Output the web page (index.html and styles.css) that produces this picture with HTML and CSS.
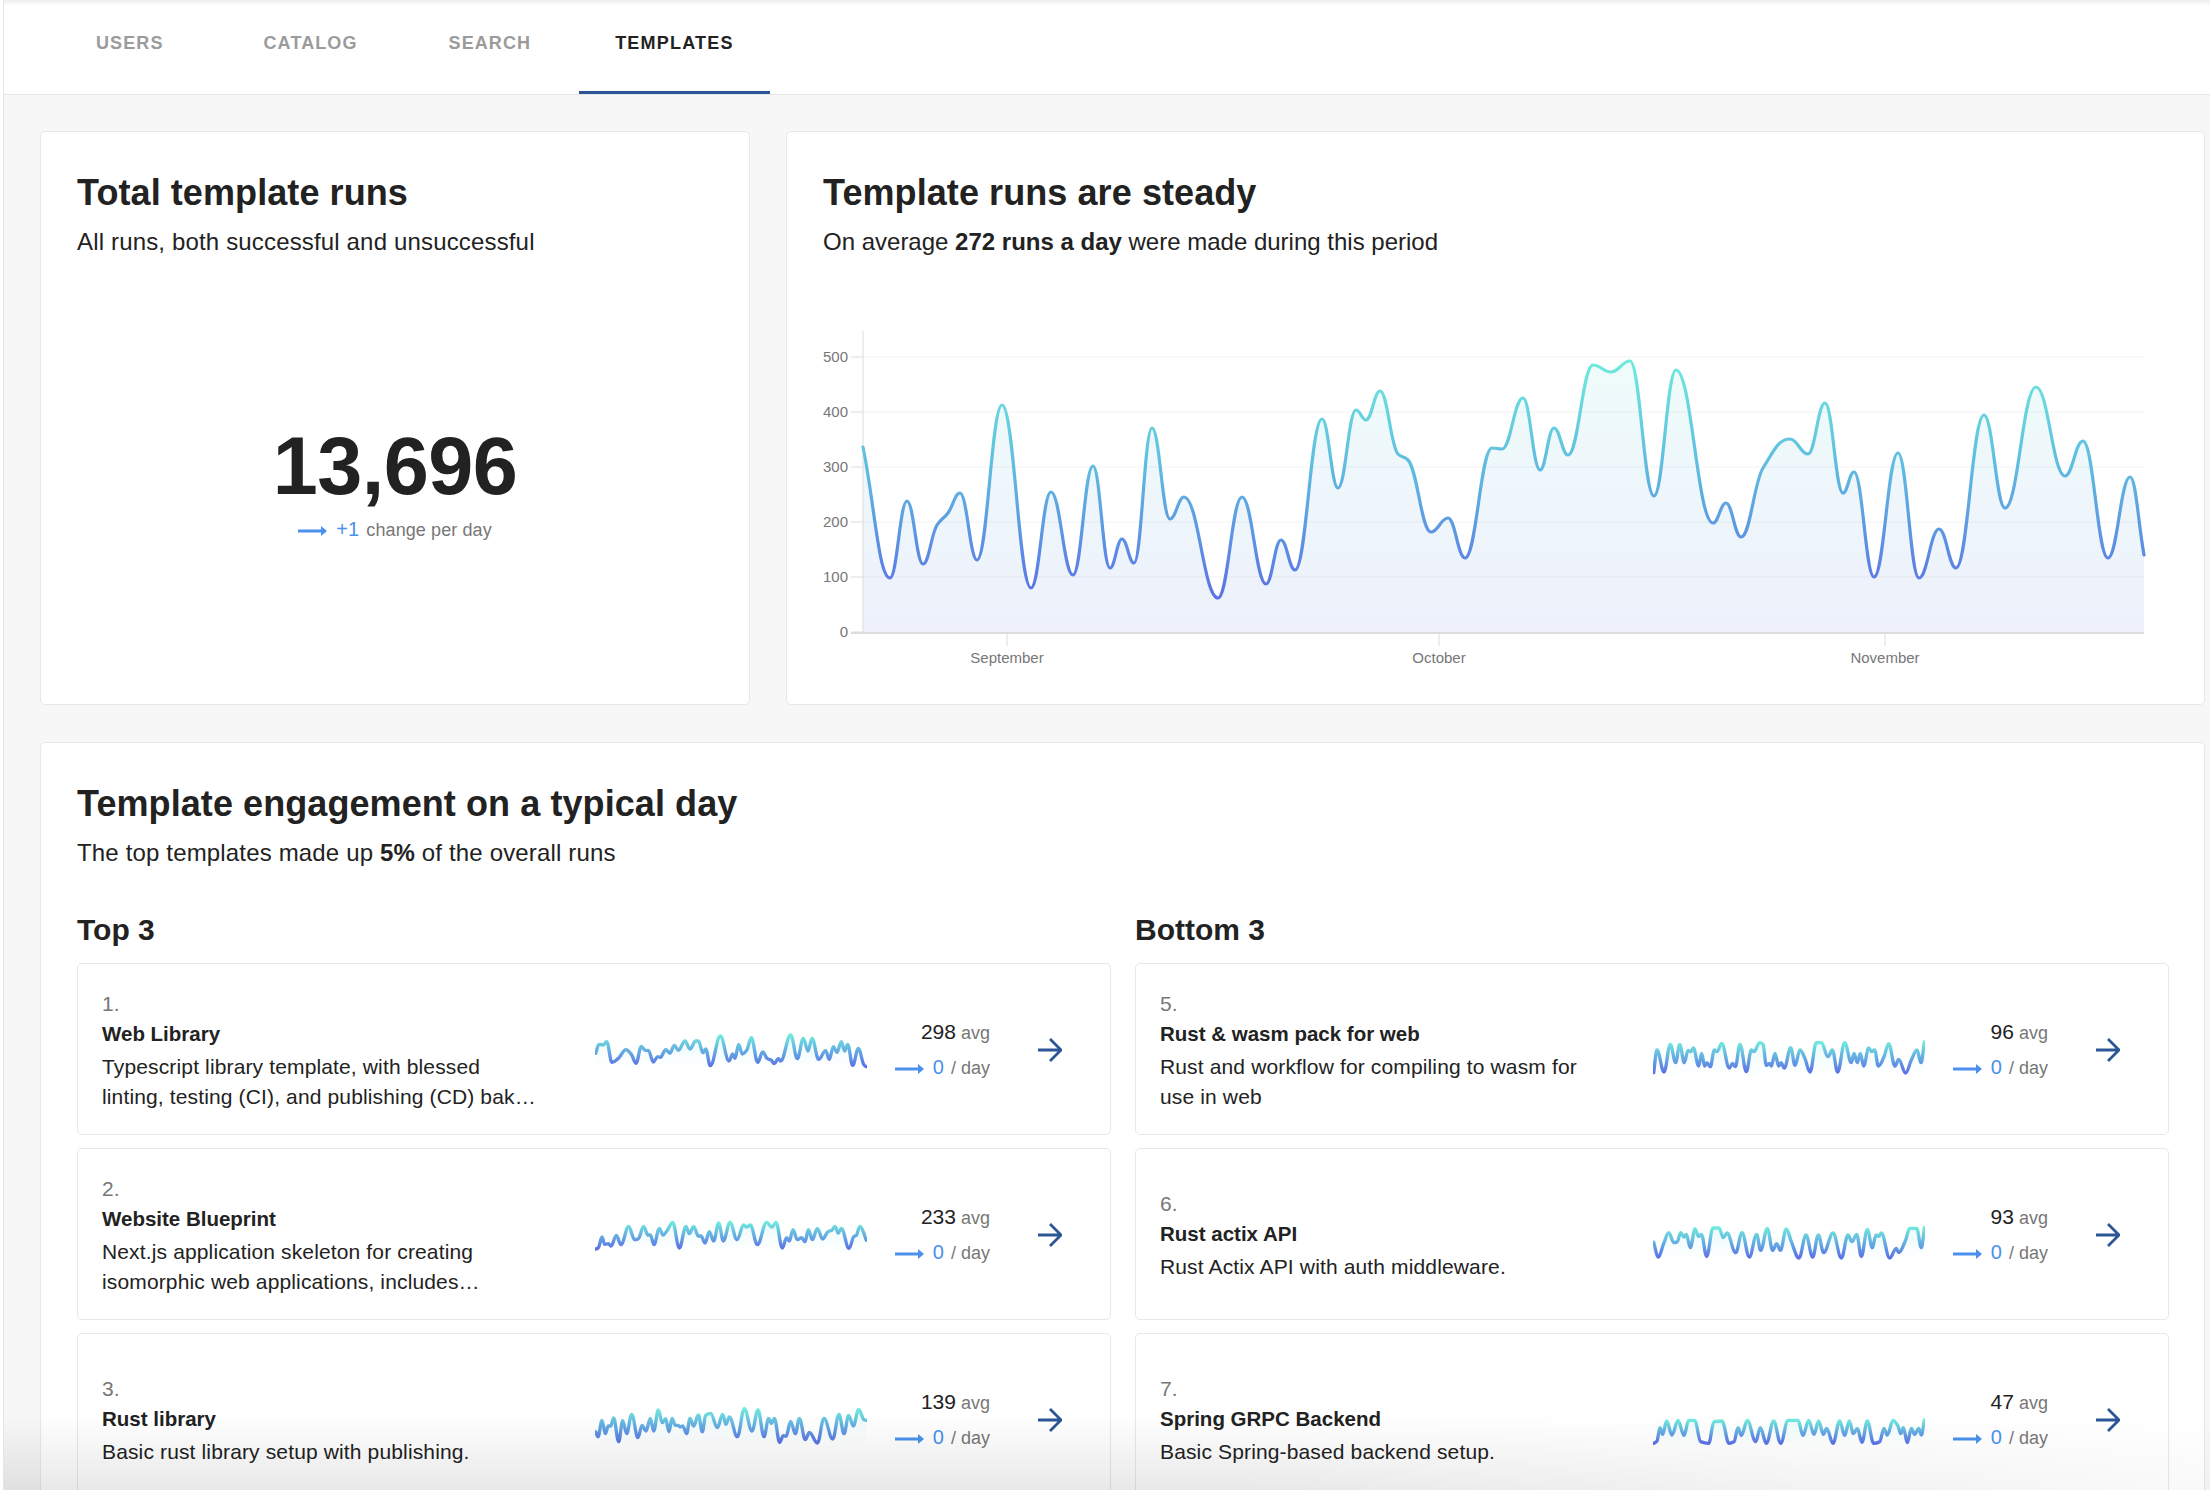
FILE: index.html
```html
<!DOCTYPE html>
<html lang="en">
<head>
<meta charset="UTF-8">
<title>Templates</title>
<link rel="stylesheet" href="styles.css">
</head>
<body>

<div class="page">
    <nav class="tabs">
        <a class="tab" href="#">USERS</a>
        <a class="tab" href="#">CATALOG</a>
        <a class="tab" href="#">SEARCH</a>
        <a class="tab tab-active" href="#">TEMPLATES</a>
    </nav>

    <main class="content">
        <div class="top-row">
            <section class="card">
                <h2 class="card-title">Total template runs</h2>
                <p class="card-sub card-sub-wide">All runs, both successful and unsuccessful</p>
                <div class="total">
                    <div class="total-number">13,696</div>
                    <div class="total-change">
                        <svg class="trend" viewBox="0 0 29 10"><path d="M0 5H24" /><polygon points="23,0 29,5 23,10" /></svg><span class="blue">+1</span> change per day
                    </div>
                </div>
            </section>

            <section class="card">
                <h2 class="card-title">Template runs are steady</h2>
                <p class="card-sub">On average <b>272 runs a day</b> were made during this period</p>
                <svg id="runsChart" class="runs-chart" viewBox="823 320 1345 350"></svg>
            </section>
        </div>

        <section class="card">
            <h2 class="card-title">Template engagement on a typical day</h2>
            <p class="card-sub card-sub-wide">The top templates made up <b>5%</b> of the overall runs</p>

            <div class="columns">
                <div class="column">
                    <h3 class="column-title">Top 3</h3>

                    <div class="item">
                        <div class="item-info">
                            <div class="item-num">1.</div>
                            <div class="item-name">Web Library</div>
                            <div class="item-desc">Typescript library template, with blessed linting, testing (CI), and publishing (CD) bak…</div>
                        </div>
                        <svg class="spark" data-spark="0"></svg>
                        <div class="item-stats">
                            <div class="stat-avg"><b>298</b> avg</div>
                            <div class="stat-day"><svg class="trend" viewBox="0 0 29 10"><path d="M0 5H24" /><polygon points="23,0 29,5 23,10" /></svg><span class="blue">0</span> / day</div>
                        </div>
                        <svg class="go" viewBox="0 0 24 24"><path d="M0 12H23M12 1L23 12L12 23" /></svg>
                    </div>

                    <div class="item">
                        <div class="item-info">
                            <div class="item-num">2.</div>
                            <div class="item-name">Website Blueprint</div>
                            <div class="item-desc">Next.js application skeleton for creating isomorphic web applications, includes…</div>
                        </div>
                        <svg class="spark" data-spark="1"></svg>
                        <div class="item-stats">
                            <div class="stat-avg"><b>233</b> avg</div>
                            <div class="stat-day"><svg class="trend" viewBox="0 0 29 10"><path d="M0 5H24" /><polygon points="23,0 29,5 23,10" /></svg><span class="blue">0</span> / day</div>
                        </div>
                        <svg class="go" viewBox="0 0 24 24"><path d="M0 12H23M12 1L23 12L12 23" /></svg>
                    </div>

                    <div class="item">
                        <div class="item-info">
                            <div class="item-num">3.</div>
                            <div class="item-name">Rust library</div>
                            <div class="item-desc">Basic rust library setup with publishing.</div>
                        </div>
                        <svg class="spark" data-spark="2"></svg>
                        <div class="item-stats">
                            <div class="stat-avg"><b>139</b> avg</div>
                            <div class="stat-day"><svg class="trend" viewBox="0 0 29 10"><path d="M0 5H24" /><polygon points="23,0 29,5 23,10" /></svg><span class="blue">0</span> / day</div>
                        </div>
                        <svg class="go" viewBox="0 0 24 24"><path d="M0 12H23M12 1L23 12L12 23" /></svg>
                    </div>
                </div>

                <div class="column">
                    <h3 class="column-title">Bottom 3</h3>

                    <div class="item">
                        <div class="item-info">
                            <div class="item-num">5.</div>
                            <div class="item-name">Rust &amp; wasm pack for web</div>
                            <div class="item-desc">Rust and workflow for compiling to wasm for use in web</div>
                        </div>
                        <svg class="spark" data-spark="3"></svg>
                        <div class="item-stats">
                            <div class="stat-avg"><b>96</b> avg</div>
                            <div class="stat-day"><svg class="trend" viewBox="0 0 29 10"><path d="M0 5H24" /><polygon points="23,0 29,5 23,10" /></svg><span class="blue">0</span> / day</div>
                        </div>
                        <svg class="go" viewBox="0 0 24 24"><path d="M0 12H23M12 1L23 12L12 23" /></svg>
                    </div>

                    <div class="item">
                        <div class="item-info">
                            <div class="item-num">6.</div>
                            <div class="item-name">Rust actix API</div>
                            <div class="item-desc">Rust Actix API with auth middleware.</div>
                        </div>
                        <svg class="spark" data-spark="4"></svg>
                        <div class="item-stats">
                            <div class="stat-avg"><b>93</b> avg</div>
                            <div class="stat-day"><svg class="trend" viewBox="0 0 29 10"><path d="M0 5H24" /><polygon points="23,0 29,5 23,10" /></svg><span class="blue">0</span> / day</div>
                        </div>
                        <svg class="go" viewBox="0 0 24 24"><path d="M0 12H23M12 1L23 12L12 23" /></svg>
                    </div>

                    <div class="item">
                        <div class="item-info">
                            <div class="item-num">7.</div>
                            <div class="item-name">Spring GRPC Backend</div>
                            <div class="item-desc">Basic Spring-based backend setup.</div>
                        </div>
                        <svg class="spark" data-spark="5"></svg>
                        <div class="item-stats">
                            <div class="stat-avg"><b>47</b> avg</div>
                            <div class="stat-day"><svg class="trend" viewBox="0 0 29 10"><path d="M0 5H24" /><polygon points="23,0 29,5 23,10" /></svg><span class="blue">0</span> / day</div>
                        </div>
                        <svg class="go" viewBox="0 0 24 24"><path d="M0 12H23M12 1L23 12L12 23" /></svg>
                    </div>
                </div>
            </div>
        </section>
    </main>

    <div class="top-shade"></div>
    <div class="bottom-fade"></div>
</div>

<script src="charts.js"></script>
</body>
</html>
```

FILE: styles.css
```css
* {
    box-sizing: border-box;
}
html, body {
    height: 100%;
    margin: 0;
    overflow: hidden;
}
body {
    font-family: "Liberation Sans", Arial, sans-serif;
    color: #222;
    background-color: #fff;
}
.page {
    position: relative;
    height: 100%;
    margin-left: 3px;
    overflow: hidden;
    border-left: 1px solid #e6e6e6;
    background-color: #f7f7f7;
}

/* tabs */
.tabs {
    display: flex;
    height: 95px;
    padding-left: 56px;
    border-bottom: 1px solid #e6e6e6;
    background-color: #fff;
}
.tab {
    display: block;
    height: 94px;
    padding: 32px 36px 0;
    margin-right: 28px;
    font-size: 18px;
    font-weight: bold;
    letter-spacing: 1.1px;
    line-height: 22px;
    text-decoration: none;
    color: #9b9b9b;
}
.tab:nth-child(2) {
    margin-right: 19px;
}
.tab:nth-child(3) {
    margin-right: 12px;
}
.tab-active {
    margin-right: 0;
    color: #222;
    border-bottom: 3px solid #2c5596;
}
.tab-active {
    letter-spacing: 1.2px;
}

.content {
    padding: 36px 5px 0 36px;
}
.top-row {
    display: grid;
    grid-template-columns: 710px 1fr;
    gap: 36px;
    margin-bottom: 37px;
}

/* cards */
.card {
    padding: 36px;
    border: 1px solid #e8e8e8;
    border-radius: 5px;
    background-color: #fff;
}
.top-row .card {
    height: 574px;
}
.card-title {
    margin: 0;
    font-size: 36px;
    line-height: 50px;
    letter-spacing: .08px;
}
.card-sub {
    margin: 6px 0 0;
    font-size: 24px;
    line-height: 36px;
}
.card-sub-wide {
    letter-spacing: .16px;
}

.total {
    margin-top: 161px;
    text-align: center;
}
.total-number {
    font-size: 81px;
    font-weight: bold;
    letter-spacing: -.5px;
    line-height: 90px;
}
.total-change {
    margin-top: 6px;
    font-size: 18px;
    letter-spacing: .1px;
    line-height: 24px;
    color: #777;
}
.blue {
    margin-right: 2px;
    font-size: 20px;
    color: #4a90ec;
}
.trend {
    width: 29px;
    height: 10px;
    margin-right: 9px;
    fill: #4a90ec;
    stroke: #4a90ec;
    stroke-width: 3;
}
.trend polygon {
    stroke: none;
}

.runs-chart {
    display: block;
    width: 1345px;
    height: 350px;
    margin-top: 60px;
}
.runs-chart text {
    font-size: 15px;
    fill: #777;
}

/* template lists */
.columns {
    display: grid;
    grid-template-columns: 1fr 1fr;
    gap: 24px;
    margin-top: 39px;
}
.column-title {
    margin: 0 0 13px;
    font-size: 30px;
    line-height: 40px;
}
.item {
    display: flex;
    align-items: center;
    height: 172px;
    margin-bottom: 13px;
    padding: 2px 48px 0 24px;
    border: 1px solid #e8e8e8;
    border-radius: 5px;
    background-color: #fff;
}
.item-info {
    flex: none;
    width: 493px;
    padding-right: 52px;
}
.item-num {
    font-size: 21px;
    line-height: 30px;
    color: #777;
}
.item-name {
    font-size: 20.5px;
    font-weight: bold;
    line-height: 30px;
    margin-bottom: 3px;
}
.item-desc {
    font-size: 21px;
    letter-spacing: .14px;
    line-height: 30px;
}
.spark {
    flex: none;
    width: 272px;
    height: 60px;
}
.item-stats {
    flex: none;
    width: 123px;
    text-align: right;
    font-size: 18px;
    color: #777;
}
.item-stats b {
    font-size: 21px;
    font-weight: normal;
    color: #222;
}
.stat-avg {
    line-height: 30px;
    margin-bottom: 4px;
}
.stat-day {
    line-height: 30px;
}
.go {
    flex: none;
    width: 24px;
    height: 24px;
    margin-left: 48px;
    fill: none;
    stroke: #2c5596;
    stroke-width: 2.8;
}

/* window edges */
.top-shade {
    position: absolute;
    top: 0;
    left: 0;
    right: 0;
    height: 6px;
    background: linear-gradient(to bottom, #eee, rgba(255, 255, 255, 0));
}
.bottom-fade {
    position: absolute;
    left: 0;
    right: 0;
    bottom: 0;
    height: 75px;
    background: linear-gradient(to top, rgba(0, 0, 0, .09), rgba(0, 0, 0, 0));
    -webkit-mask-image: linear-gradient(to right, #000 55%, rgba(0, 0, 0, .25));
    mask-image: linear-gradient(to right, #000 55%, rgba(0, 0, 0, .25));
}
```

FILE: charts.js
```js
const SVG_NS = "http://www.w3.org/2000/svg";

// Page coordinates read off the daily runs, peaks and dips mostly
const RUNS = [
    [863, 447], [890, 578], [907, 501], [923, 564], [937, 525], [948, 513], [960, 493], [977, 560],
    [1002, 405], [1031, 588], [1051, 492], [1073, 575], [1093, 466], [1110, 568], [1122, 539], [1134, 563],
    [1152, 428], [1170, 519], [1184, 497], [1218, 598], [1242, 497], [1266, 584], [1281, 540], [1295, 570],
    [1322, 419], [1338, 488], [1356, 410], [1366, 420], [1380, 391], [1398, 454], [1408, 460], [1431, 532],
    [1448, 518], [1465, 558], [1492, 448], [1502, 449], [1523, 398], [1540, 470], [1554, 428], [1568, 455],
    [1593, 365], [1611, 372], [1630, 361], [1654, 496], [1676, 370], [1713, 523], [1726, 503], [1741, 537],
    [1763, 468], [1790, 439], [1808, 454], [1825, 403], [1843, 493], [1854, 472], [1874, 577], [1898, 453],
    [1919, 578], [1939, 529], [1956, 568], [1984, 415], [2005, 508], [2036, 387], [2065, 476], [2083, 441],
    [2108, 558], [2130, 477], [2144, 555]
];

// Sparkline points, measured at 3x. Each row sits 555 units under the one before.
const SPARKS = [
    { row: 0, pts: "17,97 27,70 39,72 50,62 66,124 85,112 108,86 124,100 138,127 154,76 166,88 175,88 190,123 203,107 211,109 227,86 240,96 253,73 265,88 285,60 300,84 317,60 325,60 339,95 347,84 361,134 391,45 417,120 428,99 435,112 446,70 457,99 470,88 484,50 503,124 518,93 532,113 543,117 553,128 565,112 572,120 602,42 622,113 640,52 654,90 666,52 686,115 707,89 718,115 730,77 741,94 754,62 764,90 773,70 788,133 805,82 822,132 829,137" },
    { row: 1, pts: "17,684 25,680 36,648 44,670 55,668 63,675 79,643 93,671 116,616 134,656 145,653 161,616 174,642 181,642 192,671 208,622 219,642 232,628 248,604 268,681 288,616 298,638 311,616 325,645 333,645 345,666 358,632 371,660 386,606 400,660 420,604 441,656 461,612 470,618 481,612 502,671 530,604 546,618 558,604 577,681 590,650 598,660 609,626 622,656 635,650 645,662 655,626 667,656 682,622 698,654 714,632 725,628 735,616 745,636 754,622 777,682 792,646 798,644 810,616 829,658" },
    { row: 2, pts: "17,1232 24,1247 36,1198 46,1238 55,1215 62,1215 71,1191 86,1262 98,1199 110,1238 125,1180 144,1250 156,1213 168,1230 181,1192 191,1230 205,1167 217,1205 227,1193 237,1232 246,1192 256,1213 264,1213 271,1218 278,1215 290,1238 300,1192 311,1215 325,1182 337,1232 347,1183 362,1177 382,1220 398,1180 408,1210 418,1188 442,1247 463,1163 486,1230 504,1167 522,1247 536,1192 544,1207 553,1192 569,1264 580,1244 588,1246 602,1201 616,1238 628,1192 646,1256 658,1234 682,1266 702,1192 728,1254 747,1180 762,1238 776,1183 790,1215 806,1165 822,1196 829,1198" },
    { row: 0, pts: "17,155 27,87 48,153 67,70 83,125 95,70 109,125 120,88 128,92 136,81 152,135 161,97 170,135 177,125 187,137 199,87 207,92 221,67 244,141 254,127 262,137 276,70 295,152 310,87 318,92 335,65 345,70 355,133 364,127 370,135 381,97 392,135 399,125 409,141 428,80 441,133 456,87 470,110 486,153 505,65 520,65 540,107 553,87 569,153 590,65 610,125 618,97 628,125 637,97 647,135 662,81 671,92 680,87 691,135 708,107 722,68 741,135 752,115 773,156 790,117 807,87 819,125 829,63" },
    { row: 1, pts: "17,664 31,708 47,668 62,635 78,665 88,662 98,635 108,648 115,640 127,680 141,624 152,646 160,640 176,706 195,621 213,621 226,650 237,636 263,695 282,635 304,708 326,640 338,688 358,622 374,688 386,668 397,688 415,624 430,662 453,711 474,642 494,708 511,642 527,695 555,636 580,711 600,642 612,662 626,640 640,706 658,625 673,680 684,642 692,646 700,636 725,711 745,682 752,695 772,660 785,622 806,622 820,680 829,620" },
    { row: 2, pts: "17,1267 27,1260 36,1220 44,1240 56,1200 72,1242 90,1198 108,1243 122,1198 140,1198 158,1262 182,1267 198,1202 222,1200 243,1267 258,1262 270,1220 280,1243 298,1198 323,1262 337,1220 355,1267 377,1200 398,1267 420,1198 450,1198 465,1243 482,1198 498,1240 512,1200 526,1240 536,1222 555,1267 575,1200 590,1243 604,1200 616,1238 628,1222 642,1264 658,1200 677,1267 695,1262 708,1222 718,1242 735,1198 750,1215 758,1238 766,1220 778,1265 790,1222 800,1240 812,1222 820,1242 829,1197" }
];

function el(parent, name, attrs, text) {
    const node = document.createElementNS(SVG_NS, name);
    for (const key in attrs) {
        node.setAttribute(key, attrs[key]);
    }
    if (text) {
        node.textContent = text;
    }
    parent.appendChild(node);
    return node;
}

function gradient(defs, id, attrs, stops) {
    const grad = el(defs, "linearGradient", Object.assign({ id: id, x1: 0, x2: 0, y1: 0, y2: 1 }, attrs));
    stops.forEach(stop => {
        el(grad, "stop", { offset: stop[0], "stop-color": stop[1], "stop-opacity": stop[2] === undefined ? 1 : stop[2] });
    });
}

// Flat at every peak and dip, sloped where the line only passes through
function smoothPath(pts, pull) {
    const slopes = pts.map((p, i) => {
        if (i === 0 || i === pts.length - 1) {
            const q = pts[i === 0 ? 1 : i - 1];
            return (q[1] - p[1]) / (q[0] - p[0]);
        }
        const a = (p[1] - pts[i - 1][1]) / (p[0] - pts[i - 1][0]);
        const b = (pts[i + 1][1] - p[1]) / (pts[i + 1][0] - p[0]);
        return a * b <= 0 ? 0 : 2 * a * b / (a + b);
    });
    let d = "M" + pts[0][0] + " " + pts[0][1];
    for (let i = 1; i < pts.length; i++) {
        const dx = (pts[i][0] - pts[i - 1][0]) * pull;
        d += "C" + (pts[i - 1][0] + dx) + " " + (pts[i - 1][1] + slopes[i - 1] * dx) +
            " " + (pts[i][0] - dx) + " " + (pts[i][1] - slopes[i] * dx) +
            " " + pts[i][0] + " " + pts[i][1];
    }
    return d;
}

function drawRunsChart() {
    const svg = document.getElementById("runsChart");
    const defs = el(svg, "defs", {});
    const left = 863, right = 2144, bottom = 632;
    const grid = "rgba(0,0,0,.03)", axis = "#dcdcdc";

    gradient(defs, "runsStroke", { gradientUnits: "userSpaceOnUse", y1: 360, y2: 600 }, [
        [0, "#6feadd"], [.45, "#5fbbe0"], [1, "#5b70e6"]
    ]);
    gradient(defs, "runsFill", { gradientUnits: "userSpaceOnUse", y1: 360, y2: 632 }, [
        [0, "#effcfb"], [.5, "#eef6fb"], [1, "#eef1fb"]
    ]);

    const line = smoothPath(RUNS, .42);
    el(svg, "path", { d: line + "L" + right + " " + bottom + "L" + left + " " + bottom + "Z", fill: "url(#runsFill)" });

    [0, 100, 200, 300, 400, 500].forEach(value => {
        const y = bottom - value * .55;
        if (value > 0) {
            el(svg, "path", { d: "M" + left + " " + y + "H" + right, stroke: grid, "stroke-width": 1.5 });
        }
        el(svg, "path", { d: "M851 " + y + "H" + left, stroke: axis, "stroke-width": 1 });
        el(svg, "text", { x: 848, y: y + 4.5, "text-anchor": "end" }, String(value));
    });

    [["September", 1007], ["October", 1439], ["November", 1885]].forEach(tick => {
        el(svg, "path", { d: "M" + tick[1] + " " + bottom + "V646", stroke: axis, "stroke-width": 1 });
        el(svg, "text", { x: tick[1], y: 663, "text-anchor": "middle" }, tick[0]);
    });

    el(svg, "path", { d: "M" + left + " 331V" + bottom, stroke: axis, "stroke-width": 1 });
    el(svg, "path", { d: "M851 " + (bottom + 1) + "H" + right, stroke: axis, "stroke-width": 2 });
    el(svg, "path", { d: line, fill: "none", stroke: "url(#runsStroke)", "stroke-width": 3.2, "stroke-linecap": "round" });
}

function drawSparks() {
    document.querySelectorAll(".spark").forEach(svg => {
        const index = svg.dataset.spark;
        const spark = SPARKS[index];
        const pts = spark.pts.split(" ").map(p => p.split(",").map(Number));
        const top = -3 + spark.row * 555;
        const ys = pts.map(p => p[1]);
        const low = Math.max.apply(null, ys);
        const high = Math.min.apply(null, ys);

        svg.setAttribute("viewBox", "15 " + top + " 816 180");
        const defs = el(svg, "defs", {});
        gradient(defs, "sparkStroke" + index, { gradientUnits: "userSpaceOnUse", y1: high, y2: low }, [
            [0, "#6feadd"], [1, "#5b70e6"]
        ]);
        gradient(defs, "sparkFill" + index, { gradientUnits: "userSpaceOnUse", y1: high, y2: low + 12 }, [
            [0, "#dff9f7", .7], [1, "#eafafa", 0]
        ]);

        const line = smoothPath(pts, .38);
        const first = pts[0][0], last = pts[pts.length - 1][0];
        el(svg, "path", { d: line + "L" + last + " " + (low + 12) + "L" + first + " " + (low + 12) + "Z", fill: "url(#sparkFill" + index + ")" });
        el(svg, "path", { d: line, fill: "none", stroke: "url(#sparkStroke" + index + ")", "stroke-width": 10, "stroke-linecap": "round", "stroke-linejoin": "round" });
    });
}

drawRunsChart();
drawSparks();
```
